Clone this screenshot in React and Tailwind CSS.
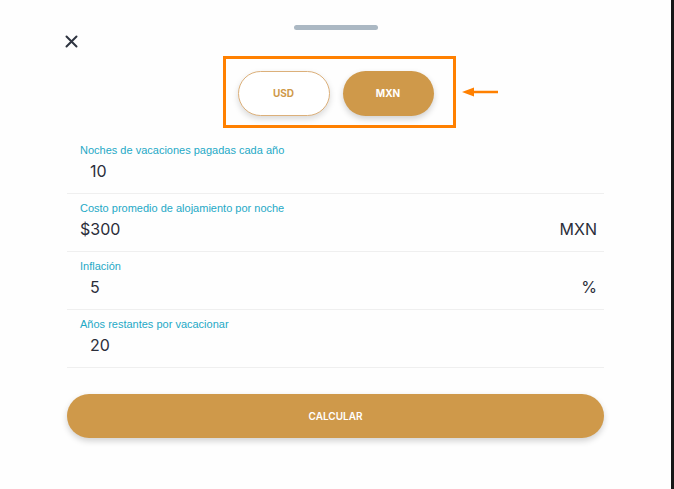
import React, { useState } from "react";

const fields = [
  { label: "Noches de vacaciones pagadas cada año", value: "10", indent: true },
  { label: "Costo promedio de alojamiento por noche", value: "$300", suffix: "MXN" },
  { label: "Inflación", value: "5", suffix: "%", indent: true },
  { label: "Años restantes por vacacionar", value: "20", indent: true },
];

export default function App() {
  const [currency, setCurrency] = useState("MXN");

  return (
    <div className="flex h-[489px] w-[674px] font-['Inter',sans-serif]">
      <div className="flex w-[671px] flex-col bg-[#fefefe]">
        {/* handle */}
        <div className="flex justify-center pt-[25px]">
          <div className="h-[5px] w-[84px] rounded-full bg-[#abb8c3]" />
        </div>

        {/* close */}
        <div className="ml-[65px] mt-[5px]">
          <svg width="13" height="13" viewBox="0 0 13 13" fill="none">
            <path d="M1.5 1.5 L11.5 11.5 M11.5 1.5 L1.5 11.5" stroke="#2e3440" strokeWidth="2" strokeLinecap="round" />
          </svg>
        </div>

        {/* currency toggle */}
        <div className="mt-[23px] flex justify-center">
          <div className="relative flex gap-[13px]">
            <button
              onClick={() => setCurrency("USD")}
              className={
                currency === "USD"
                  ? "h-[45px] w-[92px] rounded-full bg-[#cf994a] text-[10px] font-bold text-white shadow-[0_3px_6px_rgba(0,0,0,0.18)]"
                  : "h-[45px] w-[92px] rounded-full border border-[#dcb07a] bg-white text-[10px] font-bold text-[#cf994a] shadow-[0_3px_6px_rgba(0,0,0,0.15)]"
              }
            >
              USD
            </button>
            <button
              onClick={() => setCurrency("MXN")}
              className={
                currency === "MXN"
                  ? "h-[45px] w-[91px] rounded-full bg-[#cf994a] text-[10px] font-bold text-white shadow-[0_3px_6px_rgba(0,0,0,0.18)]"
                  : "h-[45px] w-[91px] rounded-full border border-[#dcb07a] bg-white text-[10px] font-bold text-[#cf994a] shadow-[0_3px_6px_rgba(0,0,0,0.15)]"
              }
            >
              MXN
            </button>
            {/* annotation */}
            <div className="pointer-events-none absolute -bottom-[12px] -left-[15px] -right-[22px] -top-[15px] border-[3px] border-[#ff8000]" />
            <svg className="absolute left-[223px] top-[15px]" width="38" height="12" viewBox="0 0 38 12">
              <path d="M12 6 H37" stroke="#ff8000" strokeWidth="2.5" />
              <path d="M1 6 L13 1.5 L13 10.5 Z" fill="#ff8000" />
            </svg>
          </div>
        </div>

        {/* fields */}
        <div className="ml-[67px] mt-[20px] w-[537px]">
          {fields.map((f) => (
            <div key={f.label} className="border-b border-[#efefef] pb-[12px] pt-[8px]">
              <div className="pl-[13px] font-['Liberation_Sans',sans-serif] text-[11px] leading-[12px] text-[#1fa9c6]">{f.label}</div>
              <div className="mt-[5px] flex items-center justify-between pl-[13px] pr-[7px] text-[16px] leading-[20px] text-[#2b2e3a]">
                <span className={f.indent ? "pl-[10px]" : ""}>{f.value}</span>
                {f.suffix && <span>{f.suffix}</span>}
              </div>
            </div>
          ))}
        </div>

        {/* submit */}
        <div className="ml-[67px] mt-[26px] w-[537px]">
          <button className="h-[44px] w-full rounded-full bg-[#cf994a] text-[10px] font-semibold text-white shadow-[0_3px_6px_rgba(0,0,0,0.18)]">
            CALCULAR
          </button>
        </div>
      </div>
      <div className="w-[3px] bg-[#161616]" />
    </div>
  );
}
